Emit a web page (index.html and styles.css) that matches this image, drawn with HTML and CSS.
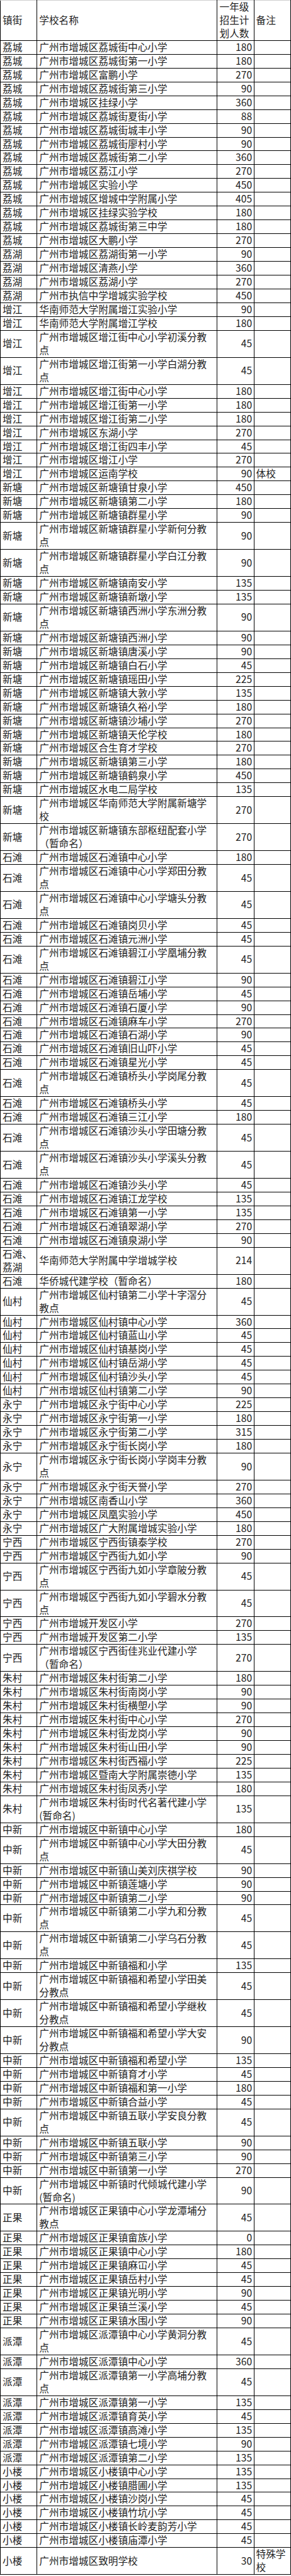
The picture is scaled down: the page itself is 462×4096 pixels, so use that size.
FILE: index.html
```html
<!DOCTYPE html>
<html lang="zh-CN">
<head>
<meta charset="utf-8">
<title>增城区小学一年级招生计划</title>
<link rel="stylesheet" href="styles.css">
</head>
<body>
<table class="sheet">
<colgroup><col class="c-town"><col class="c-name"><col class="c-num"><col class="c-note"></colgroup>
<thead>
<tr class="head"><td>镇街</td><td>学校名称</td><td>一年级招生计划人数</td><td>备注</td></tr>
</thead>
<tbody>
<tr><td>荔城</td><td>广州市增城区荔城街中心小学</td><td class="n">180</td><td></td></tr>
<tr><td>荔城</td><td>广州市增城区荔城街第一小学</td><td class="n">180</td><td></td></tr>
<tr><td>荔城</td><td>广州市增城区富鹏小学</td><td class="n">270</td><td></td></tr>
<tr><td>荔城</td><td>广州市增城区荔城街第三小学</td><td class="n">90</td><td></td></tr>
<tr><td>荔城</td><td>广州市增城区挂绿小学</td><td class="n">360</td><td></td></tr>
<tr><td>荔城</td><td>广州市增城区荔城街夏街小学</td><td class="n">88</td><td></td></tr>
<tr><td>荔城</td><td>广州市增城区荔城街城丰小学</td><td class="n">90</td><td></td></tr>
<tr><td>荔城</td><td>广州市增城区荔城街廖村小学</td><td class="n">90</td><td></td></tr>
<tr><td>荔城</td><td>广州市增城区荔城街第二小学</td><td class="n">360</td><td></td></tr>
<tr><td>荔城</td><td>广州市增城区荔江小学</td><td class="n">270</td><td></td></tr>
<tr><td>荔城</td><td>广州市增城区实验小学</td><td class="n">450</td><td></td></tr>
<tr><td>荔城</td><td>广州市增城区增城中学附属小学</td><td class="n">405</td><td></td></tr>
<tr><td>荔城</td><td>广州市增城区挂绿实验学校</td><td class="n">180</td><td></td></tr>
<tr><td>荔城</td><td>广州市增城区荔城街第三中学</td><td class="n">180</td><td></td></tr>
<tr><td>荔城</td><td>广州市增城区大鹏小学</td><td class="n">270</td><td></td></tr>
<tr><td>荔湖</td><td>广州市增城区荔湖街第一小学</td><td class="n">90</td><td></td></tr>
<tr><td>荔湖</td><td>广州市增城区清燕小学</td><td class="n">360</td><td></td></tr>
<tr><td>荔湖</td><td>广州市增城区荔湖小学</td><td class="n">270</td><td></td></tr>
<tr><td>荔湖</td><td>广州市执信中学增城实验学校</td><td class="n">450</td><td></td></tr>
<tr><td>增江</td><td>华南师范大学附属增江实验小学</td><td class="n">90</td><td></td></tr>
<tr><td>增江</td><td>华南师范大学附属增江学校</td><td class="n">180</td><td></td></tr>
<tr><td>增江</td><td>广州市增城区增江街中心小学初溪分教点</td><td class="n">45</td><td></td></tr>
<tr><td>增江</td><td>广州市增城区增江街第一小学白湖分教点</td><td class="n">45</td><td></td></tr>
<tr><td>增江</td><td>广州市增城区增江街中心小学</td><td class="n">180</td><td></td></tr>
<tr><td>增江</td><td>广州市增城区增江街第一小学</td><td class="n">180</td><td></td></tr>
<tr><td>增江</td><td>广州市增城区增江街第二小学</td><td class="n">180</td><td></td></tr>
<tr><td>增江</td><td>广州市增城区东湖小学</td><td class="n">270</td><td></td></tr>
<tr><td>增江</td><td>广州市增城区增江街四丰小学</td><td class="n">45</td><td></td></tr>
<tr><td>增江</td><td>广州市增城区增江小学</td><td class="n">270</td><td></td></tr>
<tr><td>增江</td><td>广州市增城区运南学校</td><td class="n">90</td><td>体校</td></tr>
<tr><td>新塘</td><td>广州市增城区新塘镇甘泉小学</td><td class="n">450</td><td></td></tr>
<tr><td>新塘</td><td>广州市增城区新塘镇第二小学</td><td class="n">180</td><td></td></tr>
<tr><td>新塘</td><td>广州市增城区新塘镇群星小学</td><td class="n">90</td><td></td></tr>
<tr><td>新塘</td><td>广州市增城区新塘镇群星小学新何分教点</td><td class="n">90</td><td></td></tr>
<tr><td>新塘</td><td>广州市增城区新塘镇群星小学白江分教点</td><td class="n">90</td><td></td></tr>
<tr><td>新塘</td><td>广州市增城区新塘镇南安小学</td><td class="n">135</td><td></td></tr>
<tr><td>新塘</td><td>广州市增城区新塘镇新墩小学</td><td class="n">135</td><td></td></tr>
<tr><td>新塘</td><td>广州市增城区新塘镇西洲小学东洲分教点</td><td class="n">90</td><td></td></tr>
<tr><td>新塘</td><td>广州市增城区新塘镇西洲小学</td><td class="n">90</td><td></td></tr>
<tr><td>新塘</td><td>广州市增城区新塘镇唐溪小学</td><td class="n">90</td><td></td></tr>
<tr><td>新塘</td><td>广州市增城区新塘镇白石小学</td><td class="n">45</td><td></td></tr>
<tr><td>新塘</td><td>广州市增城区新塘镇瑶田小学</td><td class="n">225</td><td></td></tr>
<tr><td>新塘</td><td>广州市增城区新塘镇大敦小学</td><td class="n">135</td><td></td></tr>
<tr><td>新塘</td><td>广州市增城区新塘镇久裕小学</td><td class="n">180</td><td></td></tr>
<tr><td>新塘</td><td>广州市增城区新塘镇沙埔小学</td><td class="n">270</td><td></td></tr>
<tr><td>新塘</td><td>广州市增城区新塘镇天伦学校</td><td class="n">180</td><td></td></tr>
<tr><td>新塘</td><td>广州市增城区合生育才学校</td><td class="n">270</td><td></td></tr>
<tr><td>新塘</td><td>广州市增城区新塘镇第三小学</td><td class="n">180</td><td></td></tr>
<tr><td>新塘</td><td>广州市增城区新塘镇鹤泉小学</td><td class="n">450</td><td></td></tr>
<tr><td>新塘</td><td>广州市增城区水电二局学校</td><td class="n">135</td><td></td></tr>
<tr><td>新塘</td><td>广州市增城区华南师范大学附属新塘学校</td><td class="n">270</td><td></td></tr>
<tr><td>新塘</td><td>广州市增城区新塘镇东部枢纽配套小学（暂命名）</td><td class="n">270</td><td></td></tr>
<tr><td>石滩</td><td>广州市增城区石滩镇中心小学</td><td class="n">180</td><td></td></tr>
<tr><td>石滩</td><td>广州市增城区石滩镇中心小学郑田分教点</td><td class="n">45</td><td></td></tr>
<tr><td>石滩</td><td>广州市增城区石滩镇中心小学塘头分教点</td><td class="n">45</td><td></td></tr>
<tr><td>石滩</td><td>广州市增城区石滩镇岗贝小学</td><td class="n">45</td><td></td></tr>
<tr><td>石滩</td><td>广州市增城区石滩镇元洲小学</td><td class="n">45</td><td></td></tr>
<tr><td>石滩</td><td>广州市增城区石滩镇碧江小学凰埔分教点</td><td class="n">45</td><td></td></tr>
<tr><td>石滩</td><td>广州市增城区石滩镇碧江小学</td><td class="n">90</td><td></td></tr>
<tr><td>石滩</td><td>广州市增城区石滩镇岳埔小学</td><td class="n">45</td><td></td></tr>
<tr><td>石滩</td><td>广州市增城区石滩镇石厦小学</td><td class="n">90</td><td></td></tr>
<tr><td>石滩</td><td>广州市增城区石滩镇麻车小学</td><td class="n">270</td><td></td></tr>
<tr><td>石滩</td><td>广州市增城区石滩镇石湖小学</td><td class="n">90</td><td></td></tr>
<tr><td>石滩</td><td>广州市增城区石滩镇旧山吓小学</td><td class="n">45</td><td></td></tr>
<tr><td>石滩</td><td>广州市增城区石滩镇星光小学</td><td class="n">45</td><td></td></tr>
<tr><td>石滩</td><td>广州市增城区石滩镇桥头小学岗尾分教点</td><td class="n">45</td><td></td></tr>
<tr><td>石滩</td><td>广州市增城区石滩镇桥头小学</td><td class="n">45</td><td></td></tr>
<tr><td>石滩</td><td>广州市增城区石滩镇三江小学</td><td class="n">180</td><td></td></tr>
<tr><td>石滩</td><td>广州市增城区石滩镇沙头小学田塘分教点</td><td class="n">45</td><td></td></tr>
<tr><td>石滩</td><td>广州市增城区石滩镇沙头小学溪头分教点</td><td class="n">45</td><td></td></tr>
<tr><td>石滩</td><td>广州市增城区石滩镇沙头小学</td><td class="n">45</td><td></td></tr>
<tr><td>石滩</td><td>广州市增城区石滩镇江龙学校</td><td class="n">135</td><td></td></tr>
<tr><td>石滩</td><td>广州市增城区石滩镇第一小学</td><td class="n">135</td><td></td></tr>
<tr><td>石滩</td><td>广州市增城区石滩镇翠湖小学</td><td class="n">270</td><td></td></tr>
<tr><td>石滩</td><td>广州市增城区石滩镇泉湖小学</td><td class="n">90</td><td></td></tr>
<tr><td>石滩、荔湖</td><td>华南师范大学附属中学增城学校</td><td class="n">214</td><td></td></tr>
<tr><td>石滩</td><td>华侨城代建学校（暂命名）</td><td class="n">180</td><td></td></tr>
<tr><td>仙村</td><td>广州市增城区仙村镇第二小学十字滘分教点</td><td class="n">45</td><td></td></tr>
<tr><td>仙村</td><td>广州市增城区仙村镇中心小学</td><td class="n">360</td><td></td></tr>
<tr><td>仙村</td><td>广州市增城区仙村镇蓝山小学</td><td class="n">45</td><td></td></tr>
<tr><td>仙村</td><td>广州市增城区仙村镇基岗小学</td><td class="n">45</td><td></td></tr>
<tr><td>仙村</td><td>广州市增城区仙村镇岳湖小学</td><td class="n">45</td><td></td></tr>
<tr><td>仙村</td><td>广州市增城区仙村镇沙头小学</td><td class="n">45</td><td></td></tr>
<tr><td>仙村</td><td>广州市增城区仙村镇第二小学</td><td class="n">90</td><td></td></tr>
<tr><td>永宁</td><td>广州市增城区永宁街中心小学</td><td class="n">225</td><td></td></tr>
<tr><td>永宁</td><td>广州市增城区永宁街第一小学</td><td class="n">180</td><td></td></tr>
<tr><td>永宁</td><td>广州市增城区永宁街第二小学</td><td class="n">315</td><td></td></tr>
<tr><td>永宁</td><td>广州市增城区永宁街长岗小学</td><td class="n">180</td><td></td></tr>
<tr><td>永宁</td><td>广州市增城区永宁街长岗小学岗丰分教点</td><td class="n">90</td><td></td></tr>
<tr><td>永宁</td><td>广州市增城区永宁街天誉小学</td><td class="n">270</td><td></td></tr>
<tr><td>永宁</td><td>广州市增城区南香山小学</td><td class="n">360</td><td></td></tr>
<tr><td>永宁</td><td>广州市增城区凤凰实验小学</td><td class="n">450</td><td></td></tr>
<tr><td>永宁</td><td>广州市增城区广大附属增城实验小学</td><td class="n">180</td><td></td></tr>
<tr><td>宁西</td><td>广州市增城区宁西街镇泰学校</td><td class="n">270</td><td></td></tr>
<tr><td>宁西</td><td>广州市增城区宁西街九如小学</td><td class="n">90</td><td></td></tr>
<tr><td>宁西</td><td>广州市增城区宁西街九如小学章陂分教点</td><td class="n">45</td><td></td></tr>
<tr><td>宁西</td><td>广州市增城区宁西街九如小学碧水分教点</td><td class="n">45</td><td></td></tr>
<tr><td>宁西</td><td>广州市增城开发区小学</td><td class="n">270</td><td></td></tr>
<tr><td>宁西</td><td>广州市增城开发区第二小学</td><td class="n">135</td><td></td></tr>
<tr><td>宁西</td><td>广州市增城区宁西街佳兆业代建小学（暂命名）</td><td class="n">270</td><td></td></tr>
<tr><td>朱村</td><td>广州市增城区朱村街第二小学</td><td class="n">180</td><td></td></tr>
<tr><td>朱村</td><td>广州市增城区朱村街南岗小学</td><td class="n">90</td><td></td></tr>
<tr><td>朱村</td><td>广州市增城区朱村街横塱小学</td><td class="n">90</td><td></td></tr>
<tr><td>朱村</td><td>广州市增城区朱村街中心小学</td><td class="n">270</td><td></td></tr>
<tr><td>朱村</td><td>广州市增城区朱村街龙岗小学</td><td class="n">90</td><td></td></tr>
<tr><td>朱村</td><td>广州市增城区朱村街山田小学</td><td class="n">90</td><td></td></tr>
<tr><td>朱村</td><td>广州市增城区朱村街西福小学</td><td class="n">225</td><td></td></tr>
<tr><td>朱村</td><td>广州市增城区暨南大学附属崇德小学</td><td class="n">135</td><td></td></tr>
<tr><td>朱村</td><td>广州市增城区朱村街凤秀小学</td><td class="n">180</td><td></td></tr>
<tr><td>朱村</td><td>广州市增城区朱村街时代名著代建小学(暂命名)</td><td class="n">135</td><td></td></tr>
<tr><td>中新</td><td>广州市增城区中新镇中心小学</td><td class="n">180</td><td></td></tr>
<tr><td>中新</td><td>广州市增城区中新镇中心小学大田分教点</td><td class="n">45</td><td></td></tr>
<tr><td>中新</td><td>广州市增城区中新镇山美刘庆祺学校</td><td class="n">90</td><td></td></tr>
<tr><td>中新</td><td>广州市增城区中新镇莲塘小学</td><td class="n">90</td><td></td></tr>
<tr><td>中新</td><td>广州市增城区中新镇第二小学</td><td class="n">90</td><td></td></tr>
<tr><td>中新</td><td>广州市增城区中新镇第二小学九和分教点</td><td class="n">45</td><td></td></tr>
<tr><td>中新</td><td>广州市增城区中新镇第二小学乌石分教点</td><td class="n">45</td><td></td></tr>
<tr><td>中新</td><td>广州市增城区中新镇福和小学</td><td class="n">135</td><td></td></tr>
<tr><td>中新</td><td>广州市增城区中新镇福和希望小学田美分教点</td><td class="n">45</td><td></td></tr>
<tr><td>中新</td><td>广州市增城区中新镇福和希望小学继枚分教点</td><td class="n">45</td><td></td></tr>
<tr><td>中新</td><td>广州市增城区中新镇福和希望小学大安分教点</td><td class="n">90</td><td></td></tr>
<tr><td>中新</td><td>广州市增城区中新镇福和希望小学</td><td class="n">135</td><td></td></tr>
<tr><td>中新</td><td>广州市增城区中新镇育才小学</td><td class="n">45</td><td></td></tr>
<tr><td>中新</td><td>广州市增城区中新镇福和第一小学</td><td class="n">180</td><td></td></tr>
<tr><td>中新</td><td>广州市增城区中新镇合益小学</td><td class="n">45</td><td></td></tr>
<tr><td>中新</td><td>广州市增城区中新镇五联小学安良分教点</td><td class="n">45</td><td></td></tr>
<tr><td>中新</td><td>广州市增城区中新镇五联小学</td><td class="n">90</td><td></td></tr>
<tr><td>中新</td><td>广州市增城区中新镇第三小学</td><td class="n">90</td><td></td></tr>
<tr><td>中新</td><td>广州市增城区中新镇第一小学</td><td class="n">270</td><td></td></tr>
<tr><td>中新</td><td>广州市增城区中新镇时代倾城代建小学(暂命名)</td><td class="n">90</td><td></td></tr>
<tr><td>正果</td><td>广州市增城区正果镇中心小学龙潭埔分教点</td><td class="n">45</td><td></td></tr>
<tr><td>正果</td><td>广州市增城区正果镇畲族小学</td><td class="n">0</td><td></td></tr>
<tr><td>正果</td><td>广州市增城区正果镇中心小学</td><td class="n">180</td><td></td></tr>
<tr><td>正果</td><td>广州市增城区正果镇麻冚小学</td><td class="n">45</td><td></td></tr>
<tr><td>正果</td><td>广州市增城区正果镇岳村小学</td><td class="n">45</td><td></td></tr>
<tr><td>正果</td><td>广州市增城区正果镇光明小学</td><td class="n">90</td><td></td></tr>
<tr><td>正果</td><td>广州市增城区正果镇兰溪小学</td><td class="n">45</td><td></td></tr>
<tr><td>正果</td><td>广州市增城区正果镇水围小学</td><td class="n">90</td><td></td></tr>
<tr><td>派潭</td><td>广州市增城区派潭镇中心小学黄洞分教点</td><td class="n">45</td><td></td></tr>
<tr><td>派潭</td><td>广州市增城区派潭镇中心小学</td><td class="n">360</td><td></td></tr>
<tr><td>派潭</td><td>广州市增城区派潭镇第一小学高埔分教点</td><td class="n">45</td><td></td></tr>
<tr><td>派潭</td><td>广州市增城区派潭镇第一小学</td><td class="n">135</td><td></td></tr>
<tr><td>派潭</td><td>广州市增城区派潭镇育英小学</td><td class="n">45</td><td></td></tr>
<tr><td>派潭</td><td>广州市增城区派潭镇高滩小学</td><td class="n">135</td><td></td></tr>
<tr><td>派潭</td><td>广州市增城区派潭镇七境小学</td><td class="n">90</td><td></td></tr>
<tr><td>派潭</td><td>广州市增城区派潭镇第二小学</td><td class="n">135</td><td></td></tr>
<tr><td>小楼</td><td>广州市增城区小楼镇中心小学</td><td class="n">135</td><td></td></tr>
<tr><td>小楼</td><td>广州市增城区小楼镇腊圃小学</td><td class="n">135</td><td></td></tr>
<tr><td>小楼</td><td>广州市增城区小楼镇沙岗小学</td><td class="n">45</td><td></td></tr>
<tr><td>小楼</td><td>广州市增城区小楼镇竹坑小学</td><td class="n">45</td><td></td></tr>
<tr><td>小楼</td><td>广州市增城区小楼镇长岭麦韵芳小学</td><td class="n">45</td><td></td></tr>
<tr><td>小楼</td><td>广州市增城区小楼镇庙潭小学</td><td class="n">45</td><td></td></tr>
<tr><td>小楼</td><td>广州市增城区致明学校</td><td class="n">30</td><td>特殊学校</td></tr>
</tbody>
</table>
</body>
</html>
```
FILE: styles.css
```css
html, body {
  margin: 0;
  padding: 0;
  background: #ffffff;
}

.sheet {
  width: 461px;
  border-collapse: collapse;
  table-layout: fixed;
  font-family: "Noto Sans CJK SC", "Noto Sans", sans-serif;
  font-size: 15.65px;
  line-height: 20.96px;
  color: #222222;
}

.c-town { width: 58.3px; }
.c-name { width: 286.2px; }
.c-num  { width: 58.1px; }
.c-note { width: 58.4px; }

.sheet td {
  border: 1px solid #000000;
  padding: 0 5px 0 3px;
  vertical-align: middle;
  text-align: left;
  word-break: normal;
  overflow: hidden;
}

.sheet .head td {
  border-top-color: #cfcfcf;
}

.sheet td.n {
  text-align: right;
  padding: 0 2.5px 0 2px;
}
```
